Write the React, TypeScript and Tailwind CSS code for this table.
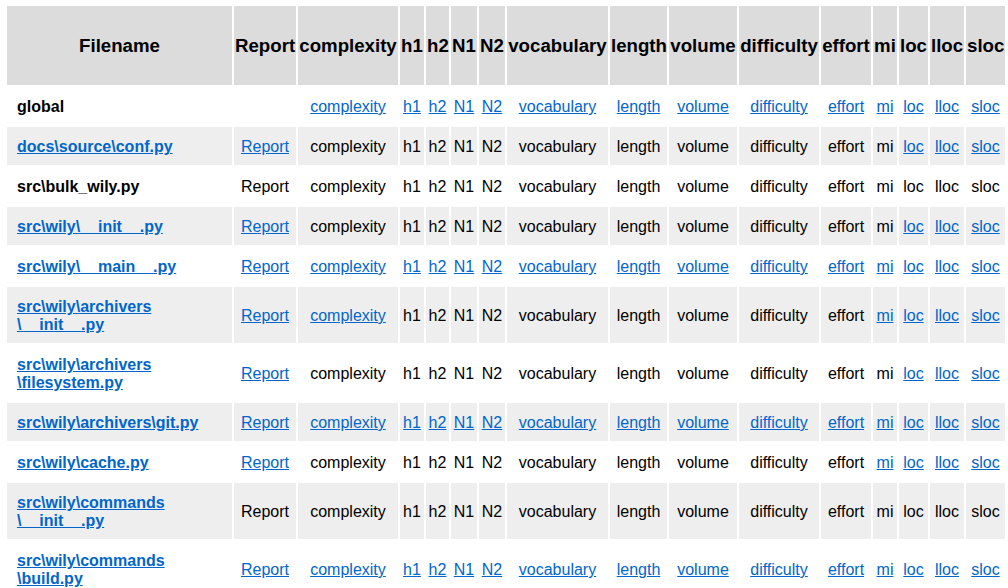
const metrics = [
  "complexity",
  "h1",
  "h2",
  "N1",
  "N2",
  "vocabulary",
  "length",
  "volume",
  "difficulty",
  "effort",
  "mi",
  "loc",
  "lloc",
  "sloc",
];

// header widths in px (border-box), Filename first
const colWidths = [225, 62, 100, 24, 23, 26, 26, 101, 57, 68, 80, 50, 24, 29, 34, 39];

type Row = {
  name: string[];
  nameLink: boolean;
  report: "link" | "plain" | "none";
  links: string[];
};

const rows: Row[] = [
  { name: ["global"], nameLink: false, report: "none", links: metrics },
  { name: ["docs\\source\\conf.py"], nameLink: true, report: "link", links: ["loc", "lloc", "sloc"] },
  { name: ["src\\bulk_wily.py"], nameLink: false, report: "plain", links: [] },
  { name: ["src\\wily\\__init__.py"], nameLink: true, report: "link", links: ["loc", "lloc", "sloc"] },
  { name: ["src\\wily\\__main__.py"], nameLink: true, report: "link", links: metrics },
  {
    name: ["src\\wily\\archivers", "\\__init__.py"],
    nameLink: true,
    report: "link",
    links: ["complexity", "mi", "loc", "lloc", "sloc"],
  },
  {
    name: ["src\\wily\\archivers", "\\filesystem.py"],
    nameLink: true,
    report: "link",
    links: ["loc", "lloc", "sloc"],
  },
  { name: ["src\\wily\\archivers\\git.py"], nameLink: true, report: "link", links: metrics },
  { name: ["src\\wily\\cache.py"], nameLink: true, report: "link", links: ["mi", "loc", "lloc", "sloc"] },
  { name: ["src\\wily\\commands", "\\__init__.py"], nameLink: true, report: "plain", links: [] },
  { name: ["src\\wily\\commands", "\\build.py"], nameLink: true, report: "link", links: metrics },
  { name: ["src\\wily\\commands", "\\diff.py"], nameLink: true, report: "link", links: ["loc", "lloc", "sloc"] },
  { name: ["src\\wily\\commands", "\\graph.py"], nameLink: true, report: "link", links: metrics },
];

function Cell({ text, link }: { text: string; link: boolean }) {
  return link ? (
    <a href="#" className="text-[#0066cc] underline">
      {text}
    </a>
  ) : (
    <span>{text}</span>
  );
}

export default function App() {
  return (
    <div className="w-[1008px] overflow-hidden bg-white font-['Liberation_Sans',Arial,sans-serif] text-black">
      <table className="ml-[5px] mt-[4px] w-[1002px] table-fixed border-separate border-spacing-[2px]">
        <thead>
          <tr>
            {["Filename", "Report", ...metrics].map((label, i) => (
              <th
                key={label}
                style={{ width: colWidths[i] }}
                className="h-[79px] bg-[#dcdcdc] px-px text-center text-[18.67px] font-bold whitespace-nowrap"
              >
                {label}
              </th>
            ))}
          </tr>
        </thead>
        <tbody>
          {rows.map((row, idx) => (
            <tr key={row.name.join("")} className={idx % 2 === 1 ? "bg-[#eeeeee]" : "bg-white"}>
              <td className="pt-[11px] pb-[9px] pl-[10px] pr-px text-left text-[16px] leading-[18px] font-bold whitespace-nowrap">
                {row.nameLink ? (
                  <a href="#" className="text-[#0066cc] underline">
                    {row.name.map((part, j) => (
                      <span key={part}>
                        {j > 0 ? <br /> : null}
                        {part}
                      </span>
                    ))}
                  </a>
                ) : (
                  row.name.join("")
                )}
              </td>
              <td className="px-px pt-[11px] pb-[9px] text-center text-[16px] leading-[18px] whitespace-nowrap">
                {row.report === "none" ? null : <Cell text="Report" link={row.report === "link"} />}
              </td>
              {metrics.map((m) => (
                <td
                  key={m}
                  className="px-px pt-[11px] pb-[9px] text-center text-[16px] leading-[18px] whitespace-nowrap"
                >
                  <Cell text={m} link={row.links.includes(m)} />
                </td>
              ))}
            </tr>
          ))}
        </tbody>
      </table>
    </div>
  );
}
